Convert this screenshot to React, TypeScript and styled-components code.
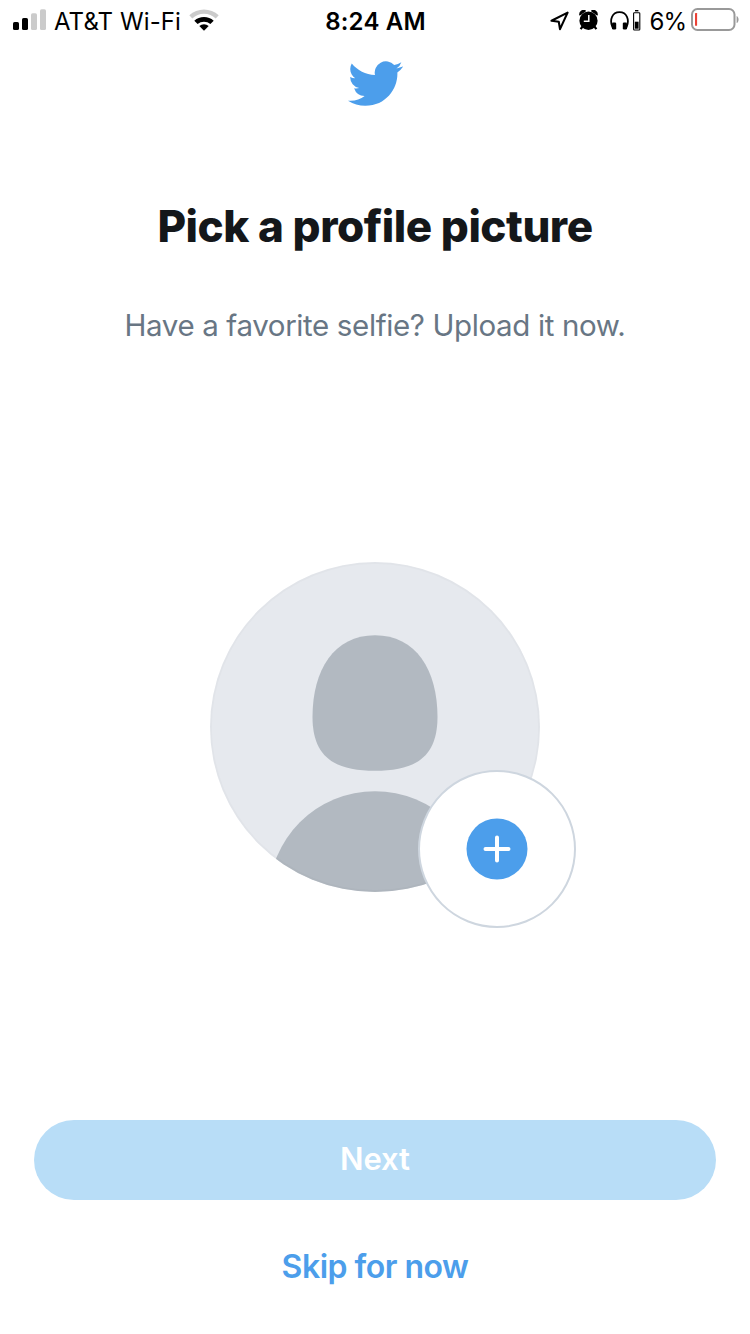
import React from 'react';
import styled, { createGlobalStyle } from 'styled-components';

const GlobalStyle = createGlobalStyle`
  * { box-sizing: border-box; }
  body { margin: 0; background: #fff; font-family: Inter, "Liberation Sans", sans-serif; }
  button { font-family: inherit; border: 0; padding: 0; background: none; }
  svg { display: block; flex: none; }
`;

const Screen = styled.main`
  width: 750px;
  height: 1334px;
  display: flex;
  flex-direction: column;
  align-items: center;
  background: #fff;
  overflow: hidden;
`;

const StatusBar = styled.header`
  width: 100%;
  height: 40px;
  display: grid;
  grid-template-columns: 1fr auto 1fr;
  align-items: center;
  padding: 0 10px 0 13px;
  color: #000;
`;

const StatusGroup = styled.div<{ $end?: boolean }>`
  display: flex;
  align-items: center;
  height: 40px;
  justify-content: ${(p) => (p.$end ? 'flex-end' : 'flex-start')};
`;

const StatusText = styled.span<{ $weight?: number; $spacing?: number }>`
  font-size: 24px;
  line-height: 36px;
  padding-top: 4px;
  white-space: nowrap;
  font-weight: ${(p) => p.$weight ?? 400};
  letter-spacing: ${(p) => p.$spacing ?? 0}px;
`;

const Clock = styled(StatusText)`
  margin-right: 2px;
`;

const Carrier = styled(StatusText)`
  margin: 0 8px 0 7px;
`;

const Percent = styled(StatusText)`
  margin: 0 5px 0 8px;
`;

const Logo = styled.div`
  margin-top: 21px;
  height: 46px;
`;

const Title = styled.h1`
  margin: 89px 0 0;
  font-size: 44px;
  line-height: 60px;
  font-weight: 800;
  letter-spacing: -0.48px;
  color: #14171a;
  white-space: nowrap;
`;

const Subtitle = styled.p`
  margin: 49px 0 0;
  font-size: 29.5px;
  line-height: 40px;
  letter-spacing: -0.37px;
  color: #687684;
  white-space: nowrap;
`;

const AvatarPicker = styled.div`
  position: relative;
  width: 330px;
  height: 330px;
  margin-top: 217px;
`;

const AddButton = styled.button`
  position: absolute;
  left: 208px;
  top: 208px;
  width: 158px;
  height: 158px;
  display: flex;
  align-items: center;
  justify-content: center;
  border: 2px solid #ced6df;
  border-radius: 50%;
  background: #fff;
`;

const Actions = styled.footer`
  width: 100%;
  margin-top: 228px;
  padding: 0 34px;
  display: flex;
  flex-direction: column;
  align-items: center;
  gap: 42px;
`;

const NextButton = styled.button`
  width: 100%;
  height: 80px;
  border-radius: 40px;
  background: #b8ddf7;
  color: #fff;
  font-size: 31px;
  font-weight: 600;
  line-height: 78px;
  letter-spacing: -0.1px;
  padding-bottom: 2px;
`;

const SkipButton = styled.button`
  height: 50px;
  color: #4c9eeb;
  font-size: 32px;
  line-height: 50px;
  font-weight: 600;
  letter-spacing: -0.5px;
  white-space: nowrap;
`;

const SignalIcon = () => (
  <svg width="34" height="22" viewBox="0 0 34 22">
    <rect x="0" y="13" width="6" height="8" rx="1.6" />
    <rect x="9" y="9" width="6" height="12" rx="1.6" />
    <rect x="18" y="4.2" width="6" height="16.8" rx="1.6" fill="#cbcbcb" />
    <rect x="27" y="0.3" width="6" height="20.7" rx="1.6" fill="#cbcbcb" />
  </svg>
);

const WifiIcon = () => (
  <svg width="30" height="22" viewBox="0 0 30 22">
    <path d="M0.3 6.3a21.5 21.5 0 0 1 29.4 0l-3 3.2a17 17 0 0 0-23.4 0z" fill="#cbcbcb" />
    <path d="M5.3 11.7a14.4 14.4 0 0 1 19.4 0l-3.3 3.4a9.6 9.6 0 0 0-12.8 0z" />
    <path d="M10.3 17a7.2 7.2 0 0 1 9.4 0L15 21.7z" />
  </svg>
);

const LocationIcon = () => (
  <svg width="20" height="20" viewBox="0 0 20 20">
    <path
      d="M17.6 1.6 1.5 9.8l7.3 1 1.2 7.3z"
      fill="none"
      stroke="#000"
      strokeWidth="2.1"
      strokeLinejoin="round"
    />
  </svg>
);

const AlarmIcon = () => (
  <svg width="20" height="21" viewBox="0 0 20 21">
    <path d="M.9 4.8A3.8 3.8 0 0 1 6.2.9zM18.1 4.8A3.8 3.8 0 0 0 12.8.9z" stroke="#000" strokeWidth="1.4" strokeLinejoin="round" />
    <path d="m3.6 16.5-2 2.6M15.4 16.5l2 2.6" stroke="#000" strokeWidth="2.2" />
    <ellipse cx="9.5" cy="10.8" rx="9.1" ry="9.2" />
    <path d="M9.8 5v6.2H4.8" fill="none" stroke="#fff" strokeWidth="1.5" />
  </svg>
);

const HeadphonesIcon = () => (
  <svg width="32" height="22" viewBox="0 0 32 22">
    <path d="M2.5 17.5C-.9 9.5 2.3 2.2 9.5 2.2S19.9 9.5 16.5 17.5" fill="none" stroke="#000" strokeWidth="1.8" />
    <rect x="2" y="12.5" width="4.2" height="7" rx="1.2" />
    <rect x="12.8" y="12.5" width="4.2" height="7" rx="1.2" />
    <rect x="25" y="0" width="3.4" height="1.4" />
    <rect x="23.6" y="2.8" width="6.2" height="17.2" rx=".8" fill="#fff" stroke="#000" strokeWidth="1.1" />
    <rect x="24.8" y="11.7" width="3.8" height="7" />
  </svg>
);

const BatteryIcon = () => (
  <svg width="49" height="24" viewBox="0 0 49 24">
    <rect x="1" y="1" width="42.5" height="21" rx="5.5" fill="none" stroke="#999" strokeWidth="2" />
    <rect x="4" y="5.1" width="2.1" height="12.6" rx=".5" fill="#ea4236" />
    <path d="M45.6 7.9c2.6 1 2.6 6.2 0 7.2z" fill="#999" />
  </svg>
);

const BirdIcon = () => (
  <svg width="55" height="45" viewBox="0 2.1 24 19.8" preserveAspectRatio="none" fill="#4c9eeb">
    <path d="M23.953 4.57a10 10 0 01-2.825.775 4.958 4.958 0 002.163-2.723c-.951.555-2.005.959-3.127 1.184a4.92 4.92 0 00-8.384 4.482C7.69 8.095 4.067 6.13 1.64 3.162a4.822 4.822 0 00-.666 2.475c0 1.71.87 3.213 2.188 4.096a4.904 4.904 0 01-2.228-.616v.06a4.923 4.923 0 003.946 4.827 4.996 4.996 0 01-2.212.085 4.936 4.936 0 004.604 3.417 9.867 9.867 0 01-6.102 2.105c-.39 0-.779-.023-1.17-.067a13.995 13.995 0 007.557 2.209c9.053 0 13.998-7.496 13.998-13.985 0-.21 0-.42-.015-.63A9.935 9.935 0 0024 4.59z" />
  </svg>
);

const AvatarArt = () => (
  <svg width="330" height="330" viewBox="0 0 330 330">
    <defs>
      <clipPath id="avatar-disc">
        <circle cx="165" cy="165" r="165" />
      </clipPath>
    </defs>
    <g clipPath="url(#avatar-disc)">
      <rect width="330" height="330" fill="#e6e9ee" />
      <path
        d="M165 73.2C206 73.2 227.5 108 227.5 155C227.5 197 203 208.8 165 208.8S102.5 197 102.5 155C102.5 108 124 73.2 165 73.2Z"
        fill="#b2b9c1"
      />
      <circle cx="165" cy="335.5" r="106.3" fill="#b2b9c1" />
    </g>
    <circle cx="165" cy="165" r="164" fill="none" stroke="#000" strokeOpacity=".02" strokeWidth="2" />
  </svg>
);

const PlusIcon = () => (
  <svg width="62" height="62" viewBox="0 0 62 62">
    <circle cx="31" cy="31" r="30.5" fill="#4c9eeb" />
    <path d="M31 19.5v23M19.5 31h23" stroke="#fff" strokeWidth="4" strokeLinecap="round" />
  </svg>
);

const IconSlot = styled.span<{ $right?: number; $shift?: number }>`
  display: flex;
  margin-right: ${(p) => p.$right ?? 0}px;
  padding-top: ${(p) => p.$shift ?? 0}px;
`;

export default function App() {
  return (
    <Screen>
      <GlobalStyle />
      <StatusBar>
        <StatusGroup>
          <SignalIcon />
          <Carrier $spacing={0.1}>AT&amp;T Wi-Fi</Carrier>
          <WifiIcon />
        </StatusGroup>
        <Clock $weight={600} $spacing={0.2}>8:24 AM</Clock>
        <StatusGroup $end>
          <IconSlot $right={9} $shift={1}><LocationIcon /></IconSlot>
          <IconSlot $right={11}><AlarmIcon /></IconSlot>
          <IconSlot $shift={2}><HeadphonesIcon /></IconSlot>
          <Percent $spacing={-1}>6%</Percent>
          <IconSlot><BatteryIcon /></IconSlot>
        </StatusGroup>
      </StatusBar>
      <Logo><BirdIcon /></Logo>
      <Title>Pick a profile picture</Title>
      <Subtitle>Have a favorite selfie? Upload it now.</Subtitle>
      <AvatarPicker>
        <AvatarArt />
        <AddButton aria-label="Add photo"><PlusIcon /></AddButton>
      </AvatarPicker>
      <Actions>
        <NextButton>Next</NextButton>
        <SkipButton>Skip for now</SkipButton>
      </Actions>
    </Screen>
  );
}
